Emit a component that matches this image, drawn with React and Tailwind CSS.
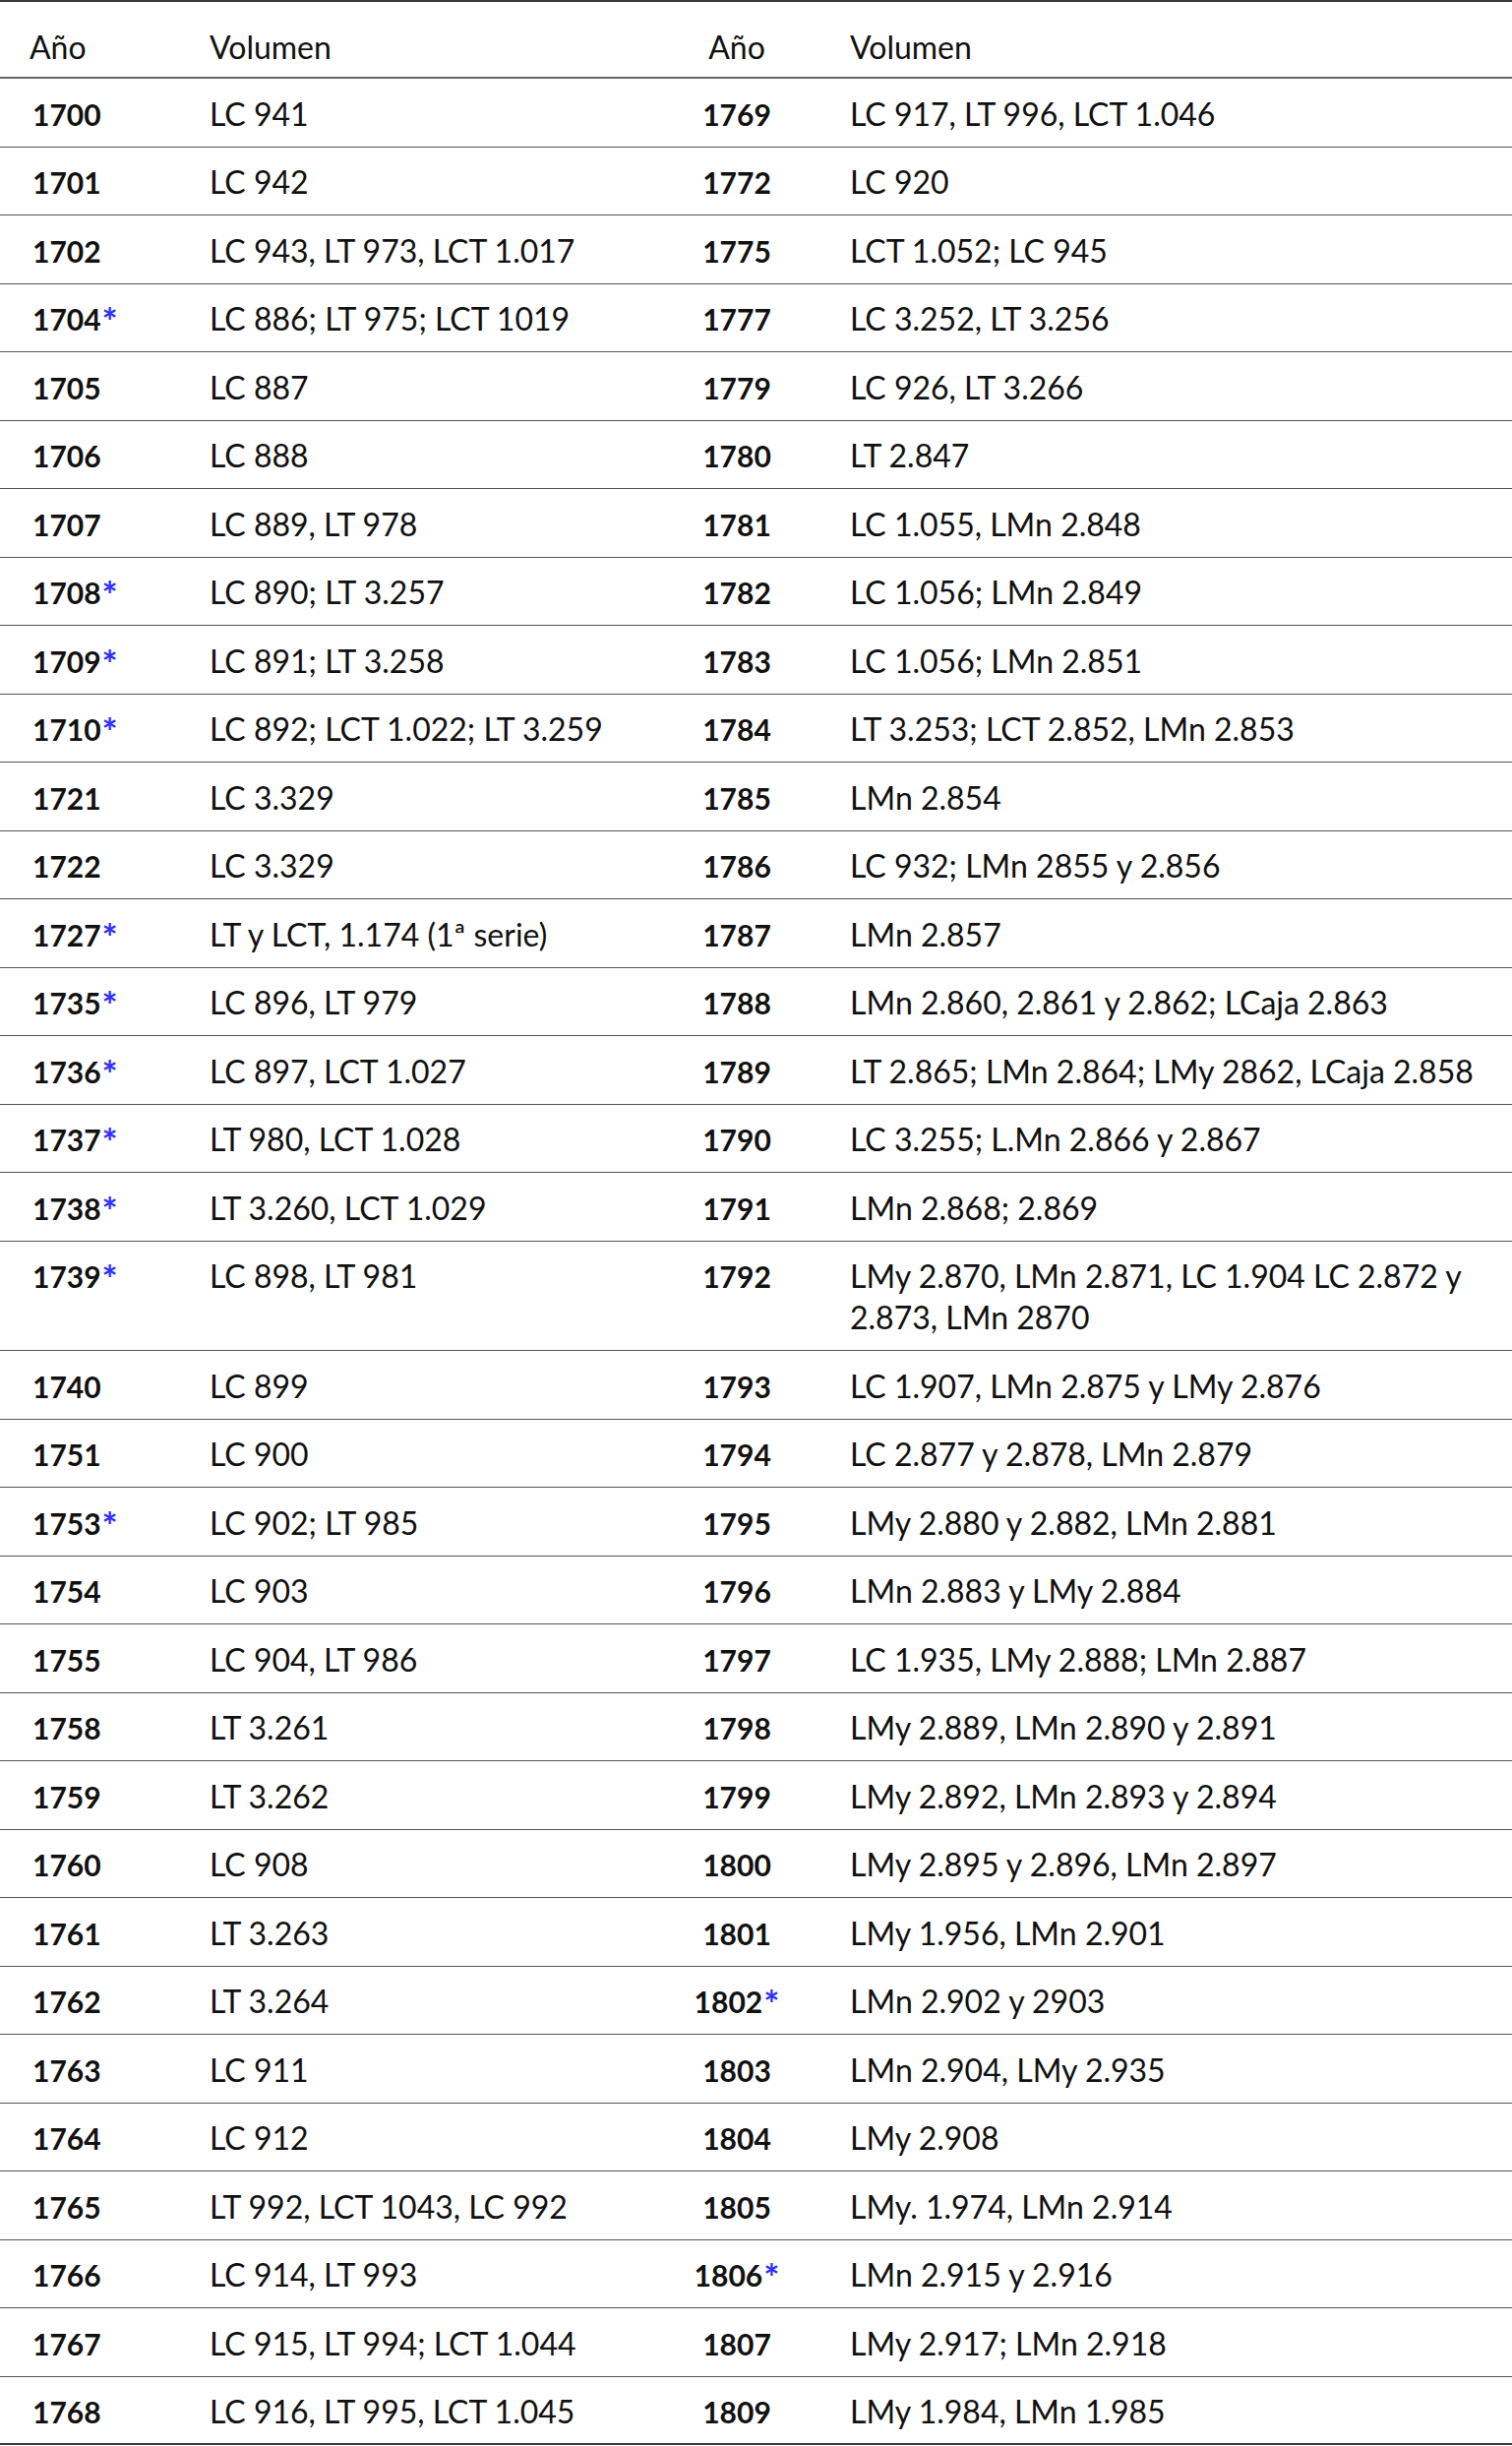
import React from "react";

const left = [
  ["1700", false, "LC 941"],
  ["1701", false, "LC 942"],
  ["1702", false, "LC 943, LT 973, LCT 1.017"],
  ["1704", true, "LC 886; LT 975; LCT 1019"],
  ["1705", false, "LC 887"],
  ["1706", false, "LC 888"],
  ["1707", false, "LC 889, LT 978"],
  ["1708", true, "LC 890; LT 3.257"],
  ["1709", true, "LC 891; LT 3.258"],
  ["1710", true, "LC 892; LCT 1.022; LT 3.259"],
  ["1721", false, "LC 3.329"],
  ["1722", false, "LC 3.329"],
  ["1727", true, "LT y LCT, 1.174 (1ª serie)"],
  ["1735", true, "LC 896, LT 979"],
  ["1736", true, "LC 897, LCT 1.027"],
  ["1737", true, "LT 980, LCT 1.028"],
  ["1738", true, "LT 3.260, LCT 1.029"],
  ["1739", true, "LC 898, LT 981"],
  ["1740", false, "LC 899"],
  ["1751", false, "LC 900"],
  ["1753", true, "LC 902; LT 985"],
  ["1754", false, "LC 903"],
  ["1755", false, "LC 904, LT 986"],
  ["1758", false, "LT 3.261"],
  ["1759", false, "LT 3.262"],
  ["1760", false, "LC 908"],
  ["1761", false, "LT 3.263"],
  ["1762", false, "LT 3.264"],
  ["1763", false, "LC 911"],
  ["1764", false, "LC 912"],
  ["1765", false, "LT 992, LCT 1043, LC 992"],
  ["1766", false, "LC 914, LT 993"],
  ["1767", false, "LC 915, LT 994; LCT 1.044"],
  ["1768", false, "LC 916, LT 995, LCT 1.045"],
];

const right = [
  ["1769", false, "LC 917, LT 996, LCT 1.046"],
  ["1772", false, "LC 920"],
  ["1775", false, "LCT 1.052; LC 945"],
  ["1777", false, "LC 3.252, LT 3.256"],
  ["1779", false, "LC 926, LT 3.266"],
  ["1780", false, "LT 2.847"],
  ["1781", false, "LC 1.055, LMn 2.848"],
  ["1782", false, "LC 1.056; LMn 2.849"],
  ["1783", false, "LC 1.056; LMn 2.851"],
  ["1784", false, "LT 3.253; LCT 2.852, LMn 2.853"],
  ["1785", false, "LMn 2.854"],
  ["1786", false, "LC 932; LMn 2855 y 2.856"],
  ["1787", false, "LMn 2.857"],
  ["1788", false, "LMn 2.860, 2.861 y 2.862; LCaja 2.863"],
  ["1789", false, "LT 2.865; LMn 2.864; LMy 2862, LCaja 2.858"],
  ["1790", false, "LC 3.255; L.Mn 2.866 y 2.867"],
  ["1791", false, "LMn 2.868; 2.869"],
  ["1792", false, ["LMy 2.870, LMn 2.871, LC 1.904 LC 2.872 y", "2.873, LMn 2870"]],
  ["1793", false, "LC 1.907, LMn 2.875 y LMy 2.876"],
  ["1794", false, "LC 2.877 y 2.878, LMn 2.879"],
  ["1795", false, "LMy 2.880 y 2.882, LMn 2.881"],
  ["1796", false, "LMn 2.883 y LMy 2.884"],
  ["1797", false, "LC 1.935, LMy 2.888; LMn 2.887"],
  ["1798", false, "LMy 2.889, LMn 2.890 y 2.891"],
  ["1799", false, "LMy 2.892, LMn 2.893 y 2.894"],
  ["1800", false, "LMy 2.895 y 2.896, LMn 2.897"],
  ["1801", false, "LMy 1.956, LMn 2.901"],
  ["1802", true, "LMn 2.902 y 2903"],
  ["1803", false, "LMn 2.904, LMy 2.935"],
  ["1804", false, "LMy 2.908"],
  ["1805", false, "LMy. 1.974, LMn 2.914"],
  ["1806", true, "LMn 2.915 y 2.916"],
  ["1807", false, "LMy 2.917; LMn 2.918"],
  ["1809", false, "LMy 1.984, LMn 1.985"],
];

function Year({ year, star }) {
  return (
    <span className="text-[30px] font-bold">
      {year}
      {star && (
        <span className="relative top-[5px] ml-[1px] text-[38px] leading-[0] text-[#2f2fff]">*</span>
      )}
    </span>
  );
}

function Volume({ text }) {
  if (Array.isArray(text)) {
    return (
      <>
        <span className="whitespace-nowrap">{text[0]}</span>
        <br />
        {text[1]}
      </>
    );
  }
  return text;
}

export default function App() {
  return (
    <div
      className="w-[1537px] bg-white text-[32px] leading-[42px] text-[#111]"
      style={{ fontFamily: "Lato, 'Open Sans', sans-serif" }}
    >
      <div className="border-t-2 border-[#3a3a3a]">
        <div className="grid grid-cols-[183px_481px_170px_1fr] border-b-2 border-[#666] pt-[24.5px] pb-[9.5px]">
          <div className="pl-[30px]">Año</div>
          <div className="pl-[30px]">Volumen</div>
          <div className="text-center">Año</div>
          <div className="pl-[30px]">Volumen</div>
        </div>
        {left.map((l, i) => {
          const r = right[i];
          const last = i === left.length - 1;
          return (
            <div
              key={l[0]}
              className={`grid grid-cols-[183px_481px_170px_1fr] pt-[14.5px] ${
                last ? "border-b-2 border-[#3a3a3a] pb-[11px]" : "border-b border-[#555] pb-[12px]"
              }`}
            >
              <div className="pl-[33px]">
                <Year year={l[0]} star={l[1]} />
              </div>
              <div className="pl-[30px]">
                <Volume text={l[2]} />
              </div>
              <div className="text-center">
                <Year year={r[0]} star={r[1]} />
              </div>
              <div className="pl-[30px] pr-[30px]">
                <Volume text={r[2]} />
              </div>
            </div>
          );
        })}
      </div>
    </div>
  );
}
